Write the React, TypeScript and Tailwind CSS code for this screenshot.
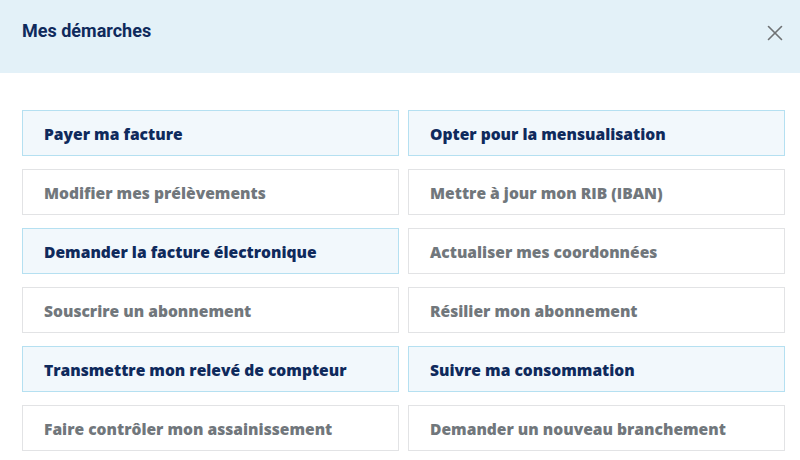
import { X } from 'lucide-react';

type Item = { label: string; highlighted: boolean };

// Order follows the grid: left, right, left, right...
const ITEMS: Item[] = [
  { label: 'Payer ma facture', highlighted: true },
  { label: 'Opter pour la mensualisation', highlighted: true },
  { label: 'Modifier mes prélèvements', highlighted: false },
  { label: 'Mettre à jour mon RIB (IBAN)', highlighted: false },
  { label: 'Demander la facture électronique', highlighted: true },
  { label: 'Actualiser mes coordonnées', highlighted: false },
  { label: 'Souscrire un abonnement', highlighted: false },
  { label: 'Résilier mon abonnement', highlighted: false },
  { label: 'Transmettre mon relevé de compteur', highlighted: true },
  { label: 'Suivre ma consommation', highlighted: true },
  { label: 'Faire contrôler mon assainissement', highlighted: false },
  { label: 'Demander un nouveau branchement', highlighted: false },
];

export default function App() {
  return (
    <div className="h-[460px] w-[800px] overflow-hidden bg-white font-['Open_Sans',sans-serif]">
      <header className="flex h-[73px] items-start justify-between bg-[#e3f1f8] pl-[22px] pr-[12px] pt-[20px]">
        <h2 className="font-['Roboto',sans-serif] text-[18px] font-bold leading-[22px] text-[#0f2a5c]">
          Mes démarches
        </h2>
        <button type="button" aria-label="Fermer" className="text-[#6f7275]">
          <X size={26} strokeWidth={1.5} />
        </button>
      </header>

      <ul className="grid grid-cols-2 gap-x-[9px] gap-y-[13px] pl-[22px] pr-[15px] pt-[37px]">
        {ITEMS.map((item) => (
          <li key={item.label}>
            <a
              href="#"
              className={
                item.highlighted
                  ? 'flex h-[46px] items-center border border-[#b5e0f1] bg-[#f2f8fc] pl-[21px] pt-[3px] text-[15.6px] font-extrabold text-[#0f2a5c]'
                  : 'flex h-[46px] items-center border border-[#e2e3e5] bg-white pl-[21px] pt-[3px] text-[15.6px] font-extrabold text-[#71777c]'
              }
            >
              {item.label}
            </a>
          </li>
        ))}
      </ul>
    </div>
  );
}
